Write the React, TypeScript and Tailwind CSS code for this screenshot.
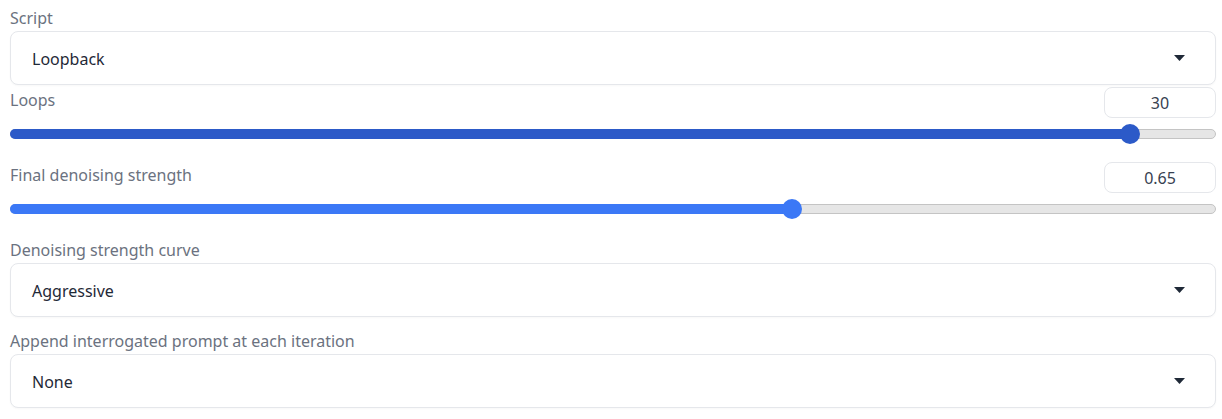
import React from "react";

const Arrow = () => (
  <svg width="11" height="6" viewBox="0 0 11 6" className="shrink-0">
    <path d="M0 0 H11 L5.5 6 Z" fill="#1f2937" />
  </svg>
);

const Select = ({ value }: { value: string }) => (
  <div className="h-[54px] rounded-[8px] border border-[#e5e7eb] bg-white flex items-center justify-between pl-[21px] pr-[30px] shadow-[0_1px_2px_rgba(0,0,0,0.03)]">
    <span className="text-[16px] leading-[24px] pt-[1px] text-[#1f2937]">{value}</span>
    <Arrow />
  </div>
);

const NumBox = ({ value }: { value: string }) => (
  <div className="w-[112px] h-[31px] rounded-[8px] border border-[#e5e7eb] bg-white flex items-center justify-center text-[16px] text-[#374151]">
    {value}
  </div>
);

const Slider = ({ pct, color }: { pct: string; color: "dark" | "light" }) => (
  <div className="relative h-[20px] flex items-center">
    <div className="w-full h-[10px] rounded-full bg-[#e6e6e6] border border-[#c4c4c4]" />
    <div
      className={`absolute left-0 top-[5px] h-[10px] rounded-l-full ${color === "dark" ? "bg-[#2c5ac8]" : "bg-[#3b78f6]"}`}
      style={{ width: pct }}
    />
    <div
      className={`absolute top-0 w-[20px] h-[20px] rounded-full -translate-x-1/2 ${color === "dark" ? "bg-[#2c5ac8]" : "bg-[#3b78f6]"}`}
      style={{ left: pct }}
    />
  </div>
);

export default function App() {
  return (
    <div
      className="w-[1222px] h-[419px] bg-white pl-[10px] pr-[6px] pt-[6px] overflow-hidden"
      style={{ fontFamily: "'Noto Sans', sans-serif" }}
    >
      <div className="leading-[24px] text-[16px] text-[#6b7280] mb-[1px]">Script</div>
      <Select value="Loopback" />

      <div className="mt-[2px] flex justify-between items-start">
        <div className="leading-[24px] text-[16px] text-[#6b7280] pt-[1px]">Loops</div>
        <NumBox value="30" />
      </div>
      <div className="mt-[6px]">
        <Slider pct="92.87%" color="dark" />
      </div>

      <div className="mt-[18px] flex justify-between items-start">
        <div className="leading-[24px] text-[16px] text-[#6b7280] pt-[1px]">Final denoising strength</div>
        <NumBox value="0.65" />
      </div>
      <div className="mt-[6px]">
        <Slider pct="64.84%" color="light" />
      </div>

      <div className="mt-[19px] leading-[24px] text-[16px] text-[#6b7280] mb-[1px]">Denoising strength curve</div>
      <Select value="Aggressive" />

      <div className="mt-[12px] leading-[24px] text-[16px] text-[#6b7280] mb-[1px]">Append interrogated prompt at each iteration</div>
      <Select value="None" />
    </div>
  );
}
